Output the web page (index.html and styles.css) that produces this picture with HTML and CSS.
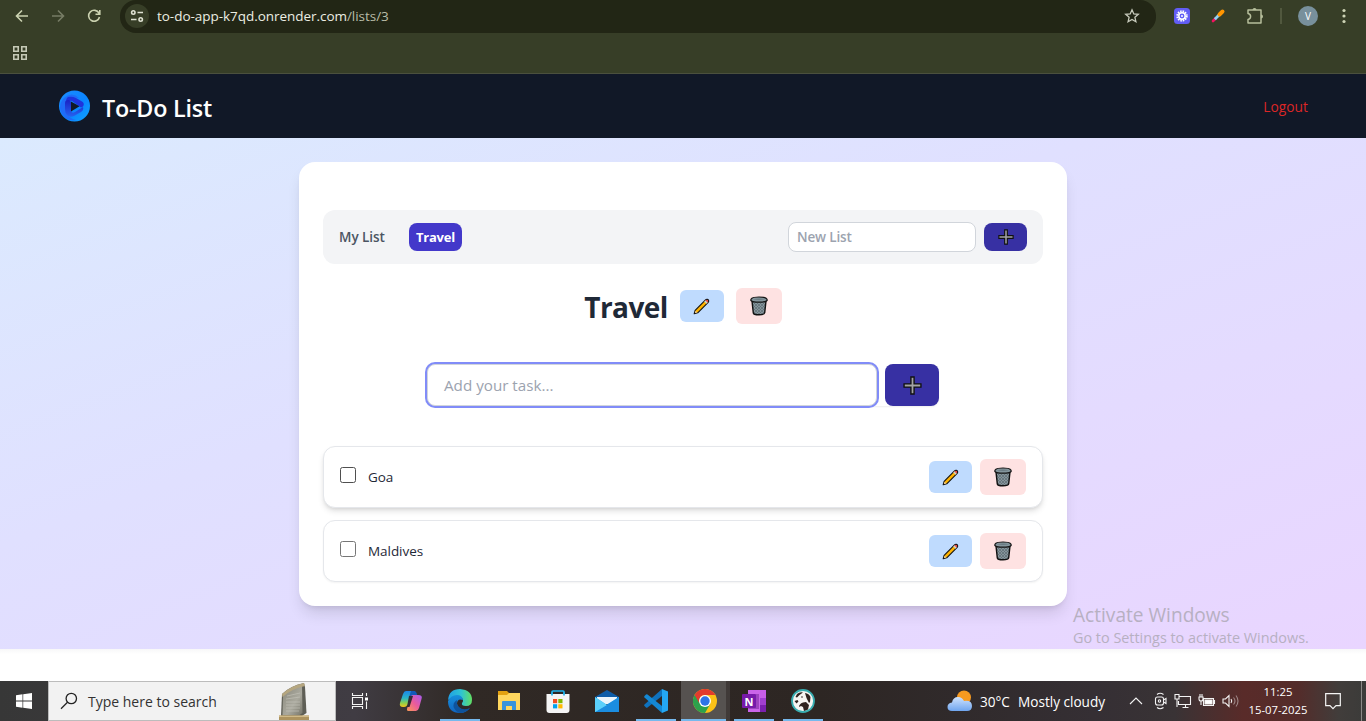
FILE: index.html
```html
<!DOCTYPE html>
<html lang="en">
<head>
<meta charset="utf-8">
<title>To-Do List</title>
<link rel="stylesheet" href="styles.css">
</head>
<body>
<svg class="defs" width="0" height="0" aria-hidden="true">
  <defs>
    <pattern id="mesh" width="3" height="3" patternUnits="userSpaceOnUse"><rect width="3" height="3" fill="#85959b"/><path d="M0 0l3 3M3 0l-3 3" stroke="#5d6c72" stroke-width=".7"/></pattern>
    <linearGradient id="logoRing" x1="0" y1="0" x2="1" y2="1"><stop offset="0" stop-color="#1d8cff"/><stop offset=".55" stop-color="#0a84ff"/><stop offset="1" stop-color="#10a4ff"/></linearGradient>
    <linearGradient id="logoIn" x1="0" y1="0" x2="0" y2="1"><stop offset="0" stop-color="#1a22c4"/><stop offset="1" stop-color="#2563f0"/></linearGradient>
    <linearGradient id="cpA" x1="0" y1="0" x2="0" y2="1"><stop offset="0" stop-color="#1b86e8"/><stop offset=".45" stop-color="#2bb5c4"/><stop offset=".75" stop-color="#8ccf4d"/><stop offset="1" stop-color="#f5c21b"/></linearGradient>
    <linearGradient id="cpB" x1="1" y1="0" x2="0" y2="1"><stop offset="0" stop-color="#a65cf0"/><stop offset=".5" stop-color="#ea5a9c"/><stop offset="1" stop-color="#fb9a55"/></linearGradient>
    <linearGradient id="edgeA" x1="0" y1="0" x2="1" y2="0"><stop offset="0" stop-color="#1f9fe6"/><stop offset=".55" stop-color="#2fc4d2"/><stop offset="1" stop-color="#62df62"/></linearGradient>
    <linearGradient id="edgeB" x1="0" y1="0" x2="0" y2="1"><stop offset="0" stop-color="#1790dc"/><stop offset="1" stop-color="#1164c0"/></linearGradient>
    <linearGradient id="cloud" x1="0" y1="0" x2="0" y2="1"><stop offset="0" stop-color="#cfe3fd"/><stop offset="1" stop-color="#6fa5ef"/></linearGradient>
    <linearGradient id="stone" x1="0" y1="0" x2="1" y2="1"><stop offset="0" stop-color="#88877b"/><stop offset=".6" stop-color="#aaa99e"/><stop offset="1" stop-color="#77766a"/></linearGradient>
    <symbol id="pencil" viewBox="0 0 18 18"><path d="M1.300 16.700l1-3.700L13 2.300q1-1 2.200-.8 1.200.2 1.400 1.400.1 1-.8 2L5 15.700z" fill="#ffb300" stroke="#151515" stroke-width="1.200" stroke-linejoin="round"/><path d="M11.900 3.600l1.200-1.200 2.500 2.500-1.200 1.200z" fill="#cdd3d6"/><path d="M13.200 2.500q1.500-1.200 2.400-.2t0 2.500z" fill="#e63950"/><path d="M2 16l.7-2.600 1.900 1.900z" fill="#f5d9a8"/></symbol>
    <symbol id="trash" viewBox="0 0 18 20"><path d="M2 5l1.300 11.800q.2 2 5.700 2t5.700-2L16 5z" fill="url(#mesh)" stroke="#111" stroke-width="1.400"/><path d="M1.600 2.500Q3 1 9 1t7.400 1.500q1 .8.700 2Q15.500 6.200 9 6.200T.9 4.500q-.3-1.200.7-2z" fill="#84969d" stroke="#151515" stroke-width="1.200"/><path d="M3 3.300q6-1.400 12 0-6 1.400-12 0z" fill="#6a7b82"/></symbol>
    <symbol id="plus" viewBox="0 0 18 18"><path d="M7.500 1h3v6.500H17v3h-6.500V17h-3v-6.500H1v-3h6.500z" fill="#a3a3a5" stroke="#111" stroke-width="1.300"/></symbol>
  </defs>
</svg>

<header class="browser">
  <div class="toolbar">
    <div class="nav-icons">
      <svg width="16" height="16" viewBox="0 0 16 16" class="line"><path d="M14 8H3M8 2.500L2.500 8 8 13.500"/></svg>
      <svg width="16" height="16" viewBox="0 0 16 16" class="line dim"><path d="M2 8h11M8 2.500L13.500 8 8 13.500"/></svg>
      <svg width="16" height="16" viewBox="0 0 16 16" class="line"><path d="M13 5.200A5.500 5.500 0 1 0 13.500 9M13.800 2v4.300H9.500"/></svg>
    </div>
    <div class="address">
      <span class="site"><svg width="14" height="14" viewBox="0 0 14 14" class="line pale"><circle cx="3.300" cy="3.500" r="1.700"/><path d="M7.500 3.500H13M1 10.500h5.500"/><circle cx="10.700" cy="10.500" r="1.700"/></svg></span>
      <span class="url">to-do-app-k7qd.onrender.com<span class="path">/lists/3</span></span>
      <svg class="star" width="16" height="16" viewBox="0 0 16 16"><path d="M8 1.800l1.800 4.100 4.500.4-3.400 3 1 4.400L8 11.400l-3.900 2.300 1-4.400-3.400-3 4.500-.4z" fill="none" stroke="#c9ccbd" stroke-width="1.300"/></svg>
    </div>
    <div class="ext">
      <svg width="16" height="16" viewBox="0 0 16 16"><rect width="16" height="16" rx="3.500" fill="#625df5"/><circle cx="8" cy="8" r="4.700" fill="none" stroke="#fff" stroke-width="2" stroke-dasharray="1.500 .96"/><circle cx="8" cy="8" r="3.200" fill="none" stroke="#fff" stroke-width="1.500"/><circle cx="8" cy="8" r="1" fill="#fff"/></svg>
      <svg width="16" height="16" viewBox="0 0 16 16"><path d="M3 13l2.500-2.500" stroke="#f31260" stroke-width="2.600" stroke-linecap="round"/><path d="M4.800 11.200l4.700-4.700" stroke="#8fd0f5" stroke-width="2.800"/><path d="M9.500 6.500L12.500 3.500" stroke="#ff9500" stroke-width="4" stroke-linecap="round"/></svg>
      <svg width="18" height="18" viewBox="0 0 18 18"><path d="M2 3h13v4.500V16H2v-3.600q2.600-.5 2.600-2.900T2 6.600z" fill="none" stroke="#b7bf9c" stroke-width="1.500" stroke-linejoin="round"/><path d="M6.500 3a2 2 0 0 1 4 0zM15 7.500a2 2 0 0 1 0 4z" fill="#b7bf9c"/></svg>
      <i class="bar"></i>
      <span class="avatar">V</span>
      <svg width="4" height="16" viewBox="0 0 4 16" fill="#cdd3b5"><circle cx="2" cy="2.500" r="1.600"/><circle cx="2" cy="8" r="1.600"/><circle cx="2" cy="13.500" r="1.600"/></svg>
    </div>
  </div>
  <div class="bookmarks">
    <svg width="14" height="14" viewBox="0 0 14 14" fill="none" stroke="#c5c9b6" stroke-width="1.600"><path d="M.8.800h4.400v4.400H.8zM8.800.800h4.400v4.400H8.800zM.8 8.800h4.400v4.400H.8zM8.800 8.800h4.400v4.400H8.800z"/></svg>
  </div>
</header>

<nav class="app-nav">
  <div class="brand">
    <svg width="32" height="32" viewBox="0 0 32 32"><circle cx="16.500" cy="16" r="15.500" fill="url(#logoRing)"/><path d="M6 8Q2 12 2 18q1 7 7 11 5 2 9 1-9-2-9-10V12q0-4 4-4h8Q14 1 6 8z" fill="#1e6cf8"/><path d="M10 7q4-1 8 1l6 3.500q3 2 1 5l-2 1-9-6.500q-3-1-5 2-2-4 1-6z" fill="#1f33dc"/><path d="M7 13q0-3 3-3 3 0 3 3v8q1 3 4 1l8-5q1 3-2 5l-7 4q-4 2-7-1-2-2-2-6z" fill="url(#logoIn)"/><path d="M13 11.500l8.500 4.800L13 21.500z" fill="#111827"/></svg>
    <span class="brand-name">To-Do List</span>
  </div>
  <a class="logout">Logout</a>
</nav>

<main class="page">
  <section class="card">
    <div class="tabs">
      <span class="tab">My List</span>
      <span class="tab active">Travel</span>
      <div class="new-list">
        <div class="new-input">New List</div>
        <button class="add small"><svg width="16" height="16"><use href="#plus"/></svg></button>
      </div>
    </div>
    <div class="title-row">
      <h1>Travel</h1>
      <button class="edit wide"><svg width="17" height="17"><use href="#pencil"/></svg></button>
      <button class="del"><svg width="18" height="20"><use href="#trash"/></svg></button>
    </div>
    <div class="task-form">
      <div class="task-input">Add your task...</div>
      <button class="add"><svg width="19" height="19"><use href="#plus"/></svg></button>
    </div>
    <ul class="tasks">
      <li class="hover"><i class="box"></i><span>Goa</span>
        <button class="edit"><svg width="17" height="17"><use href="#pencil"/></svg></button>
        <button class="del"><svg width="18" height="20"><use href="#trash"/></svg></button></li>
      <li><i class="box"></i><span>Maldives</span>
        <button class="edit"><svg width="17" height="17"><use href="#pencil"/></svg></button>
        <button class="del"><svg width="18" height="20"><use href="#trash"/></svg></button></li>
    </ul>
  </section>
  <div class="watermark"><p class="wm-title">Activate Windows</p><p class="wm-text">Go to Settings to activate Windows.</p></div>
</main>
<div class="footer"></div>

<footer class="taskbar">
  <div class="start"><svg width="16" height="16" viewBox="0 0 16 16" fill="#fff"><path d="M0 2.200l6.500-.9v6.300H0zM7.200 1.200L16 0v7.600H7.200zM0 8.400h6.500v6.300L0 13.800zM7.200 8.400H16V16l-8.800-1.200z"/></svg></div>
  <div class="search">
    <svg width="18" height="18" viewBox="0 0 18 18" fill="none" stroke="#222" stroke-width="1.300"><circle cx="11.300" cy="6.500" r="5.200"/><path d="M7.500 10.300L1 16.800"/></svg>
    <span>Type here to search</span>
    <svg class="statue" width="32" height="38" viewBox="0 0 32 38"><path d="M4 12q8-8 22-11l1 4 1.500 26-4.500 3H3z" fill="#5f5f56"/><path d="M5 14q8-8 19-11l.5 28-3 2H4.500z" fill="url(#stone)"/><path d="M4 12q8-8 22-11l1 3Q13 7 4.500 15z" fill="#b5a680"/><path d="M9 14l13-3M8 17l14-2M8 20h14M8 23h14M8 26h14M8 29h13" stroke="#cac9c0" stroke-width="1" opacity=".55"/><path d="M1 33.500h30V38H1z" fill="#ad935f"/><path d="M1 33.500h30V35H1z" fill="#d0ba88"/></svg>
  </div>
  <div class="apps">
    <span class="app view"><svg width="18" height="16" viewBox="0 0 18 16" fill="none" stroke="#f4f4f4" stroke-width="1.100"><path d="M1.500 0v2.500h10V0M1.500 16v-2.500h10V16M1.500 4.500h10v7h-10zM15.500 0v3M15.500 8.500V16"/><path d="M14 4.500h3v3h-3z" fill="#fff" stroke="none"/></svg></span>
    <span class="app"><svg width="24" height="22" viewBox="0 0 24 22"><path d="M7 1h7q2.500 0 2 2L13 14q-1 3-3 3H4q-4 0-3-4L4 4q1-3 3-3z" fill="url(#cpA)"/><path d="M10 7l2-6h3q2 0 2.600 2l.8 3z" fill="#1258b8"/><path d="M17 21h-7q-2.500 0-2-2l3-11q1-3 3-3h5q5 0 3.500 4L20 18q-1 3-3 3z" fill="url(#cpB)"/><path d="M10 6h4l-3.500 11H5q3 0 3.500-3z" fill="#302b36"/></svg></span>
    <span class="app open"><svg width="26" height="26" viewBox="0 0 26 26"><path d="M1 12Q2 1 13 1q12 1 12 11 0 6-6 6-5 0-4-3 2-2 0-5Q10 5 1 12z" fill="url(#edgeA)"/><path d="M1 13q3-6 9-6 5 0 6 5-6-2-6 4 2 6 8 6 3 0 5-2-4 5-10 5Q1 25 1 13z" fill="url(#edgeB)"/><path d="M10 12q-5 3-3 8 2 4 6 5 6 0 10-5-7 3-11-1-3-3-2-7z" fill="#0f539c"/></svg></span>
    <span class="app"><svg width="24" height="22" viewBox="0 0 24 22"><path d="M1 1h9l2 2h10v17H1z" fill="#e3a211"/><path d="M1 5h9l2-2h11v17H1z" fill="#ffd75e"/><path d="M5 20v-8q0-1 1-1h12q1 0 1 1v8h-4v-4H9v4z" fill="#3894dc"/></svg></span>
    <span class="app"><svg width="24" height="26" viewBox="0 0 24 26"><path d="M6 8V4q0-1 1-1h10q1 0 1 1v4" fill="none" stroke="#20b5ee" stroke-width="1.700"/><path d="M.5 6h23v16q0 3-3 3h-17q-3 0-3-3z" fill="#f5f5f5"/><path d="M6 5.500v2M18 5.500v2" stroke="#20b5ee" stroke-width="1.700"/><path d="M7 11h4.200v4.200H7z" fill="#f25022"/><path d="M12.300 11h4.200v4.200h-4.200z" fill="#7fba00"/><path d="M7 16.200h4.200v4.200H7z" fill="#00a4ef"/><path d="M12.300 16.200h4.200v4.200h-4.200z" fill="#ffb900"/></svg></span>
    <span class="app"><svg width="24" height="24" viewBox="0 0 24 24"><path d="M0 8l12-7 12 7v3H0z" fill="#0d5ca8"/><path d="M2 8h20v7H2z" fill="#eaf4fb"/><path d="M0 8l12 8 12-8v15H0z" fill="#31b5f3"/><path d="M24 8L0 23h24z" fill="#1b8de0"/><path d="M0 8l12 8L0 23z" fill="#5bd0fb"/></svg></span>
    <span class="app open"><svg width="24" height="24" viewBox="0 0 24 24"><path d="M18 0l6 2.500v19L18 24z" fill="#24a7f2"/><path d="M18 0v7L3.500 18.500Q2.500 19 2 18.500L.5 17q-.7-.8 0-1.500z" fill="#0f72bd"/><path d="M18 24v-7L3.500 5.500Q2.500 5 2 5.500L.5 7q-.7.800 0 1.500z" fill="#1488d4"/></svg></span>
    <span class="app open current"><svg width="24" height="24" viewBox="0 0 24 24"><circle cx="12" cy="12" r="12" fill="#fbc116"/><path d="M12 12L1.600 6A12 12 0 0 0 12 24l5.200-9z" fill="#2da24c"/><path d="M1.600 6A12 12 0 0 1 22.400 6H12a6 6 0 0 0-5.200 9z" fill="#e33b2e"/><circle cx="12" cy="12" r="6" fill="#fff"/><circle cx="12" cy="12" r="4.700" fill="#2e74e8"/></svg></span>
    <span class="app open"><svg width="24" height="22" viewBox="0 0 24 22"><path d="M6 0h12v22H6z" fill="#ca64ea"/><path d="M18 0h6v8h-6z" fill="#c85ee8"/><path d="M18 8h6v7h-6z" fill="#a13fd0"/><path d="M18 15h6v7h-6z" fill="#7b20af"/><path d="M14 4h3v15H6z" fill="#9c43bf"/><rect y="4" width="14" height="14" rx="1" fill="#7719aa"/><text x="7" y="15.500" text-anchor="middle" class="note">N</text></svg></span>
    <span class="app open"><svg width="24" height="24" viewBox="0 0 24 24"><circle cx="12" cy="12" r="11" fill="#f7f5f2" stroke="#38adb0" stroke-width="1.800"/><path d="M6 5q3-2.500 6-1.500L8.500 6 6 8.500 4.500 8zM14 4q4 .5 5.500 4l-.5 5-1 1-2.500-5zM3.500 12l3-1 1 1.500-2 2zM8 18q0-3 4-4.500l3-.5 3 3-1 4.500-4 1.500-1-4-2-1z" fill="#30231f"/><circle cx="11" cy="8" r=".8" fill="#30231f"/></svg></span>
  </div>
  <div class="weather">
    <svg width="26" height="22" viewBox="0 0 26 22"><circle cx="17" cy="7.500" r="7" fill="#f79a20"/><path d="M5 21q-4.500 0-4.500-4T5 12.500Q6 7 11 7q4 0 6 4 8-1 8 5 0 5-5 5z" fill="url(#cloud)"/></svg>
    <span class="temp">30°C</span><span class="sky">Mostly cloudy</span>
  </div>
  <div class="tray">
    <svg width="14" height="8" viewBox="0 0 14 8"><path d="M1 7l6-6 6 6"/></svg>
    <svg class="meet" width="14" height="18" viewBox="0 0 14 18"><path d="M3 2.500q3-2.500 6.500 0M3 15.500q3 2.500 6.500 0"/><rect x="1.500" y="5" width="8" height="8" rx="2"/><path d="M9.500 8l2.500-1.500v5L9.500 10"/><circle cx="5.500" cy="9" r="1.200"/></svg>
    <svg width="18" height="16" viewBox="0 0 18 16"><path d="M5.500 3.500h11v8h-12V8M8.500 14.500h6M11.500 11.500v3M1 1.500h4V6H1zM3 6v8"/></svg>
    <svg width="18" height="14" viewBox="0 0 18 14"><path d="M5.500 4.500h10v7h-10zM15.500 6.500h1v3h-1M2 0v3M4 0v3M1 3h4v2q0 2-2 2t-2-2zM3 7v4"/><path d="M7 6h7v4H7z" fill="#fff"/></svg>
    <svg width="18" height="14" viewBox="0 0 18 14"><path d="M1 5h2.500L7 1.500v11L3.500 9H1zM9 5q1.500 2 0 4"/><path d="M11.500 3.500q3 3.500 0 7M14 1.500q4 5.500 0 11" opacity=".45"/></svg>
  </div>
  <div class="clock"><span class="time">11:25</span><span class="date">15-07-2025</span></div>
  <svg class="notice" width="16" height="17" viewBox="0 0 16 17"><path d="M.7.700h14.600v12H11l-3 3-3-3H.7z" fill="none" stroke="#f5f5f5" stroke-width="1.200"/></svg>
  <i class="peek"></i>
</footer>
</body>
</html>
```
FILE: styles.css
```css
* { box-sizing: border-box; }
body { margin: 0; width: 1366px; height: 721px; overflow: hidden; background: #fff; font-family: "Open Sans", "Noto Sans", sans-serif; font-size: 13.5px; color: #1f2937; white-space: nowrap; }
svg { display: block; flex: none; }
.defs { position: absolute; }
button { display: flex; align-items: center; justify-content: center; border: 0; padding: 0; flex: none; }
h1, p, ul { margin: 0; padding: 0; }

.browser { height: 74px; background: #373e27; border-bottom: 1px solid #4b503e; }
.toolbar { height: 33px; display: flex; align-items: flex-start; }
.nav-icons { width: 120px; height: 32px; padding-left: 14px; display: flex; align-items: center; gap: 20px; }
.line { fill: none; stroke: #cbd2b0; stroke-width: 1.6; }
.dim { stroke: #777c65; }
.pale { stroke: #dfe2d2; }
.address { width: 1036px; height: 33px; border-radius: 16px; background: #222615; display: flex; align-items: center; padding: 0 16px 1px 5px; }
.site { width: 24px; height: 24px; border-radius: 50%; background: #373e27; display: flex; align-items: center; justify-content: center; }
.url { margin-left: 8px; color: #eceee3; font-size: 13.5px; letter-spacing: -.04px; }
.path { color: #b9bda8; }
.star { margin-left: auto; }
.ext { height: 32px; flex: 1; padding-left: 18px; display: flex; align-items: center; }
.ext svg:nth-child(2) { margin-left: 20px; }
.ext svg:nth-child(3) { margin-left: 20px; }
.bar { width: 2px; height: 16px; background: #51583e; margin-left: 16px; }
.avatar { width: 20px; height: 20px; margin: 0 24px 0 16px; border-radius: 50%; background: #78909c; color: #fff; font-size: 10px; display: flex; align-items: center; justify-content: center; }
.bookmarks { height: 40px; padding: 13px 13px 0; }

.app-nav { height: 64px; background: #111827; padding: 0 58px; display: flex; align-items: center; justify-content: space-between; }
.brand { display: flex; align-items: center; gap: 12px; }
.brand-name { padding-top: 3px; color: #fff; font-size: 23.3px; font-weight: 600; letter-spacing: -.2px; line-height: 32px; }
.logout { color: #dc2626; font-size: 13.8px; }

.page { position: relative; height: 511px; padding-top: 24px; background: linear-gradient(to bottom right, #dbeafe, #e0e0ff 40%, #e9d5ff); }
.card { width: 768px; height: 444px; margin: 0 auto; padding: 48px 24px 24px; background: #fff; border-radius: 16px; box-shadow: 0 10px 15px -3px rgba(0,0,0,.12), 0 4px 6px -4px rgba(0,0,0,.12); }
.tabs { height: 54px; padding: 0 16px; border-radius: 12px; background: #f3f4f6; display: flex; align-items: center; font-weight: 600; }
.tab { width: 46px; color: #4b5563; letter-spacing: -.05px; }
.active { width: 53px; height: 28px; margin-left: 24px; border-radius: 8px; background: #4338ca; color: #fff; display: flex; align-items: center; justify-content: center; font-size: 13px; font-weight: 700; letter-spacing: -.2px; }
.new-list { margin-left: auto; display: flex; align-items: center; gap: 8px; }
.new-input { width: 188px; height: 30px; border: 1px solid #d1d5db; border-radius: 8px; background: #fff; padding-left: 8px; color: #9ca3af; line-height: 28px; letter-spacing: -.15px; }
.add { width: 54px; height: 42px; border-radius: 8px; background: #3730a3; }
.small { width: 43px; height: 28px; }
.title-row { display: flex; align-items: center; justify-content: center; gap: 12px; height: 36px; margin-top: 24px; }
h1 { padding-top: 2px; font-size: 28px; font-weight: 700; line-height: 36px; letter-spacing: -.6px; }
.edit { width: 43px; height: 32px; border-radius: 6px; background: #bfdbfe; }
.wide { width: 44px; }
.del { width: 46px; height: 36px; border-radius: 6px; background: #fee2e2; }
.task-form { width: 512px; height: 42px; margin: 40px auto 0; display: flex; gap: 8px; border-radius: 8px; box-shadow: 0 1px 2px rgba(0,0,0,.07); }
.task-input { flex: 1; border: 1px solid #d1d5db; border-radius: 8px; box-shadow: 0 0 0 2px #818cf8; background: #fff; padding-left: 16px; color: #9ca3af; font-size: 15.2px; line-height: 41px; }
.tasks { list-style: none; margin-top: 40px; display: flex; flex-direction: column; gap: 12px; }
.tasks li { height: 62px; border: 1px solid #e5e7eb; border-radius: 12px; background: #fff; padding: 0 16px; display: flex; align-items: center; gap: 8px; box-shadow: 0 1px 2px rgba(0,0,0,.05); }
.tasks .hover { box-shadow: 0 4px 6px -1px rgba(0,0,0,.12), 0 2px 4px -2px rgba(0,0,0,.12); }
.tasks span { flex: 1; margin-left: 4px; letter-spacing: -.05px; }
.box { width: 16px; height: 16px; margin-bottom: 4px; border: 1px solid #767676; border-radius: 2.5px; background: #fff; }
.hover .box { border-color: #4f4f4f; }
.watermark { position: absolute; left: 1073px; top: 464px; color: #b7b0c2; font-size: 14.4px; }
.wm-title { font-size: 19.1px; line-height: 26px; }
.wm-text { line-height: 20px; }
.footer { height: 32px; background: linear-gradient(#f7f7f8, #fff 5px); }

.taskbar { height: 40px; display: flex; background: linear-gradient(90deg, #373737 0, #403c43 26%, #302925 34%, #2d2623 60%, #302a2b 70%, #352f34 80%, #393335 86%, #592b29 91%, #542c2a 95%, #413d3b 98%, #3b3b39); color: #fff; }
.start { width: 48px; display: flex; align-items: center; justify-content: center; }
.search { width: 288px; border: 1px solid #bcbcbc; background: #f2f2f2; display: flex; align-items: center; padding-left: 11px; color: #333; font-size: 14px; }
.search span { margin-left: 10px; width: 128px; }
.statue { margin-left: 62px; align-self: flex-end; }
.apps { display: flex; width: 604px; padding-left: 6px; }
.app { width: 49px; display: flex; align-items: center; justify-content: center; position: relative; border-left: 4px solid transparent; border-right: 5px solid transparent; background-clip: padding-box; }
.view { width: 45px; padding-left: 0; border-left: 0; border-right-width: 9px; }
.open { box-shadow: inset 0 -2px #76b9ed; }
.current { background-color: #565250; border-left: 0; border-right: 4px solid #403a38; padding-left: 3px; }
.note { fill: #fff; font: 700 11px "Open Sans", sans-serif; }
.weather { display: flex; align-items: center; width: 189px; font-size: 13.6px; padding-left: 7px; }
.temp { width: 31px; margin-left: 7px; }
.sky { margin-left: 7px; }
.tray { display: flex; align-items: center; gap: 6px; width: 119px; }
.tray svg { fill: none; stroke: #f3f3f3; stroke-width: 1.1; }
.tray .meet { margin-left: 5px; }
.clock { width: 60px; display: flex; flex-direction: column; align-items: center; font-size: 11.3px; line-height: 18px; padding-top: 2px; }
.notice { margin: 12px 0 0 17px; }
.peek { width: 1px; background: #8a8886; margin-left: 20px; }
```
